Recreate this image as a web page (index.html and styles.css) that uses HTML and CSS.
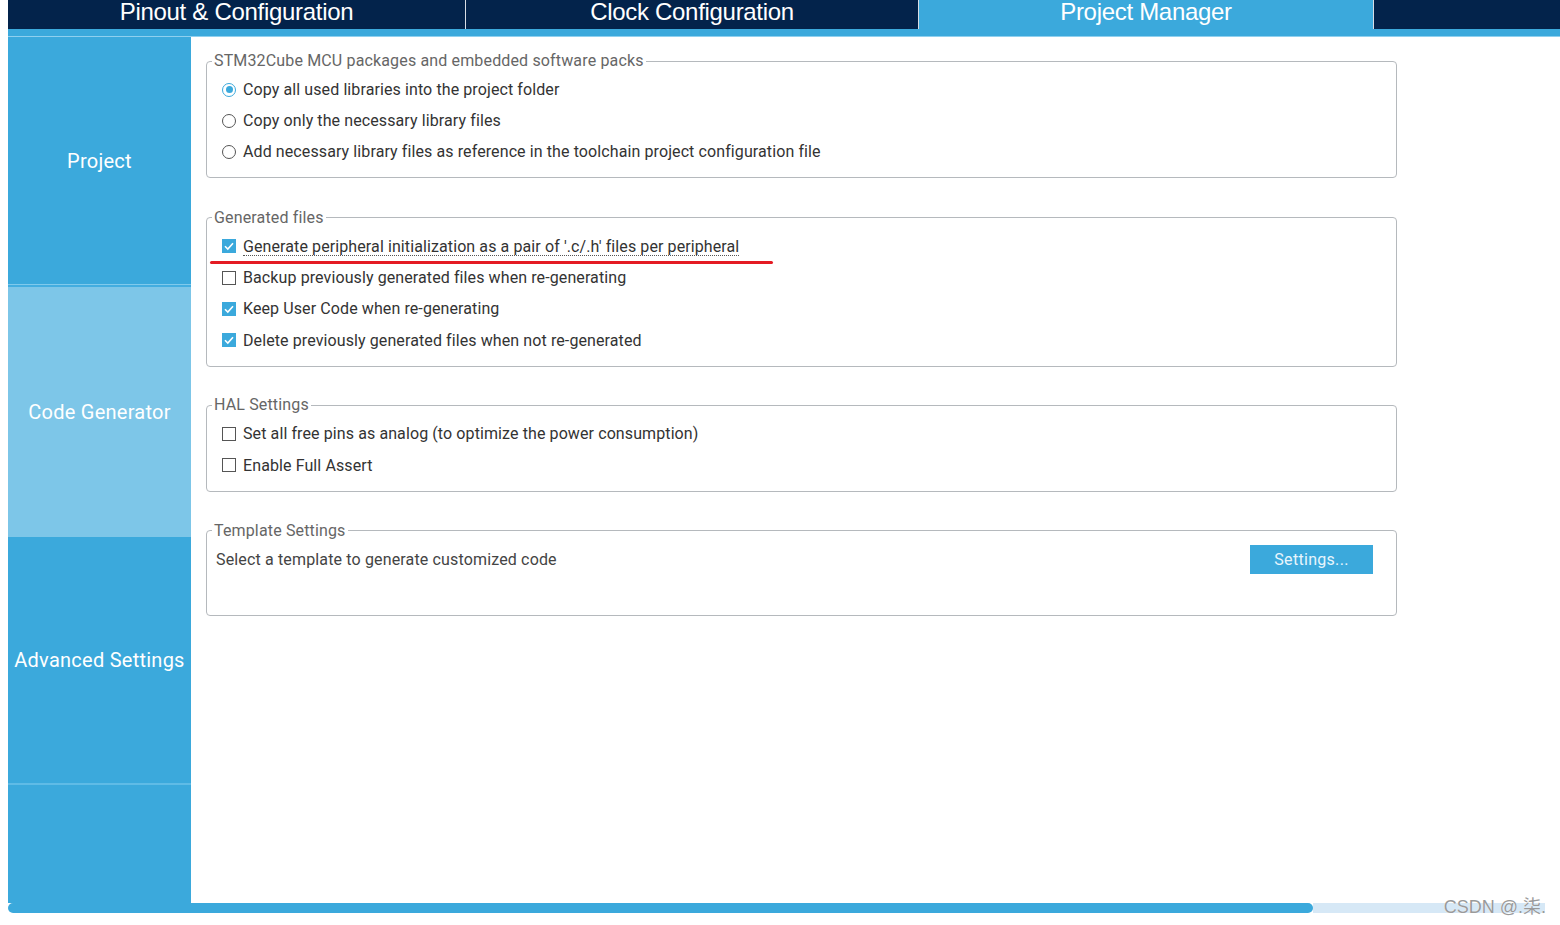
FILE: index.html
```html
<!DOCTYPE html>
<html>
<head>
<meta charset="utf-8">
<link rel="stylesheet" href="styles.css">
</head>
<body>
<div class="app">
  <div class="tabs">
    <div class="tab t1">Pinout &amp; Configuration</div>
    <div class="tab t2">Clock Configuration</div>
    <div class="tab t3 active">Project Manager</div>
    <div class="tab-rest"></div>
  </div>
  <div class="strip"></div>
  <div class="main">
    <div class="sidebar">
      <div class="side-item s1">Project</div>
      <div class="side-item s2 selected">Code Generator</div>
      <div class="side-item s3">Advanced Settings</div>
      <div class="side-item s4"></div>
    </div>
    <div class="content">
      <fieldset class="group g1">
        <legend>STM32Cube MCU packages and embedded software packs</legend>
        <div class="row"><span class="radio on"></span><span class="lbl">Copy all used libraries into the project folder</span></div>
        <div class="row"><span class="radio"></span><span class="lbl">Copy only the necessary library files</span></div>
        <div class="row"><span class="radio"></span><span class="lbl">Add necessary library files as reference in the toolchain project configuration file</span></div>
      </fieldset>
      <fieldset class="group g2">
        <legend>Generated files</legend>
        <div class="row first">
          <span class="check on"><svg width="14" height="14" viewBox="0 0 14 14"><path d="M3 7.2 L5.8 10 L11 4.2" fill="none" stroke="#fff" stroke-width="1.6"/></svg></span><span class="lbl focus">Generate peripheral initialization as a pair of '.c/.h' files per peripheral</span>
          <span class="redline"></span>
        </div>
        <div class="row"><span class="check"></span><span class="lbl">Backup previously generated files when re-generating</span></div>
        <div class="row"><span class="check on"><svg width="14" height="14" viewBox="0 0 14 14"><path d="M3 7.2 L5.8 10 L11 4.2" fill="none" stroke="#fff" stroke-width="1.6"/></svg></span><span class="lbl">Keep User Code when re-generating</span></div>
        <div class="row"><span class="check on"><svg width="14" height="14" viewBox="0 0 14 14"><path d="M3 7.2 L5.8 10 L11 4.2" fill="none" stroke="#fff" stroke-width="1.6"/></svg></span><span class="lbl">Delete previously generated files when not re-generated</span></div>
      </fieldset>
      <fieldset class="group g3">
        <legend>HAL Settings</legend>
        <div class="row"><span class="check"></span><span class="lbl">Set all free pins as analog (to optimize the power consumption)</span></div>
        <div class="row"><span class="check"></span><span class="lbl">Enable Full Assert</span></div>
      </fieldset>
      <fieldset class="group g4">
        <legend>Template Settings</legend>
        <div class="template-row">
          <span class="tlbl">Select a template to generate customized code</span>
          <button class="btn">Settings...</button>
        </div>
      </fieldset>
    </div>
  </div>
  <div class="scroll">
    <div class="thumb"></div>
    <div class="track"></div>
  </div>
  <div class="watermark">CSDN @.柒.</div>
</div>
</body>
</html>
```

FILE: styles.css
```css
html, body {
  margin: 0;
  padding: 0;
  background: #fff;
}
body {
  font-family: Roboto, "Liberation Sans", "Noto Sans CJK SC", sans-serif;
  width: 1560px;
  height: 925px;
  overflow: hidden;
}
.app {
  position: relative;
  margin-left: 8px;
  width: 1552px;
  height: 925px;
  display: flex;
  flex-direction: column;
}
.tabs {
  height: 29px;
  background: #03234b;
  display: flex;
}
.tab {
  color: #fff;
  font-family: "Liberation Sans", Arial, sans-serif;
  font-size: 24px;
  line-height: 23px;
  display: flex;
  justify-content: center;
  align-items: flex-start;
  border-right: 1px solid #d8dde5;
  letter-spacing: -0.3px;
}
.t1 { width: 457px; }
.t2 { width: 452px; }
.t3 { width: 454px; }
.tab.active { background: #3ba9dc; }
.tab-rest { flex: 1; }
.strip {
  height: 7px;
  background: #3ba9dc;
  border-bottom: 1px solid #8fd0ef;
}
.main {
  display: flex;
  height: 866px;
}
.sidebar {
  width: 183px;
  background: #3ba9dc;
  display: flex;
  flex-direction: column;
}
.side-item {
  color: #fff;
  font-size: 20px;
  letter-spacing: 0.25px;
  display: flex;
  align-items: center;
  justify-content: center;
}
.s1 { height: 247px; border-bottom: 1px solid #7fcaec; }
.s2 { height: 250px; background: #7dc6e8; border-top: 2px solid #42ade0; }
.s3 { height: 246px; border-bottom: 2px solid #5fbbe6; }
.s4 { flex: 1; }
.content {
  flex: 1;
  padding: 14px 0 0 15px;
}
.group {
  margin: 0;
  width: 1189px;
  border: 1px solid #b5b9bd;
  border-radius: 4px;
  padding: 3px 0 10px 0;
  min-width: 0;
}
.g1 { padding-bottom: 9.5px; }
.g1 .row { height: 31px; }
.g2 { margin-top: 30px; }
.g3 { margin-top: 28px; }
.g4 { margin-top: 29px; padding: 4px 0 41px 0; }
.group legend {
  margin-left: 5px;
  padding: 0 2px;
  font-size: 16px;
  line-height: 20px;
  color: #666;
  letter-spacing: 0.15px;
}
.row {
  position: relative;
  height: 31.4px;
  display: flex;
  align-items: center;
  padding-left: 15px;
  font-size: 16px;
  color: #333;
  letter-spacing: 0.1px;
}
.lbl { margin-left: 7px; }
.lbl.focus {
  border-bottom: 1px dotted #555;
  line-height: 17px;
  margin-top: 2px;
}
.radio {
  width: 12px;
  height: 12px;
  border: 1px solid #555;
  border-radius: 50%;
  background: #fff;
  position: relative;
  flex: none;
}
.radio.on {
  border-color: #3ba9dc;
}
.radio.on::after {
  content: "";
  position: absolute;
  left: 2.5px;
  top: 2.5px;
  width: 7px;
  height: 7px;
  border-radius: 50%;
  background: #3ba9dc;
}
.check {
  width: 12px;
  height: 12px;
  border: 1px solid #555;
  background: #fff;
  flex: none;
  display: block;
  position: relative;
}
.check.on {
  background: #3ba9dc;
  border-color: #3ba9dc;
}
.check svg {
  position: absolute;
  left: -1px;
  top: -1px;
}
.redline {
  position: absolute;
  left: 3px;
  top: 30px;
  width: 563px;
  height: 3px;
  border-radius: 2px;
  background: #e41b23;
}
.template-row {
  display: flex;
  align-items: center;
  justify-content: space-between;
  height: 29px;
  padding: 0 23px 0 9px;
}
.tlbl {
  font-size: 16px;
  color: #444;
  letter-spacing: 0.15px;
}
.btn {
  width: 123px;
  height: 29px;
  background: #3ba9dc;
  border: none;
  color: #e8f5fc;
  font-family: Roboto, "Liberation Sans", sans-serif;
  font-size: 16px;
  letter-spacing: 0.3px;
  padding: 0;
}
.scroll {
  height: 10px;
  display: flex;
  margin-right: 15px;
}
.thumb {
  width: 1305px;
  background: #3ba9dc;
  border-radius: 5px;
}
.track {
  flex: 1;
  background: #d6e8f6;
}
.watermark {
  position: absolute;
  right: 14px;
  bottom: 7px;
  font-family: "Liberation Sans", "Noto Sans CJK SC", sans-serif;
  font-size: 18px;
  color: #9a9a9a;
  text-shadow: 0 0 1px #fff;
}
```
